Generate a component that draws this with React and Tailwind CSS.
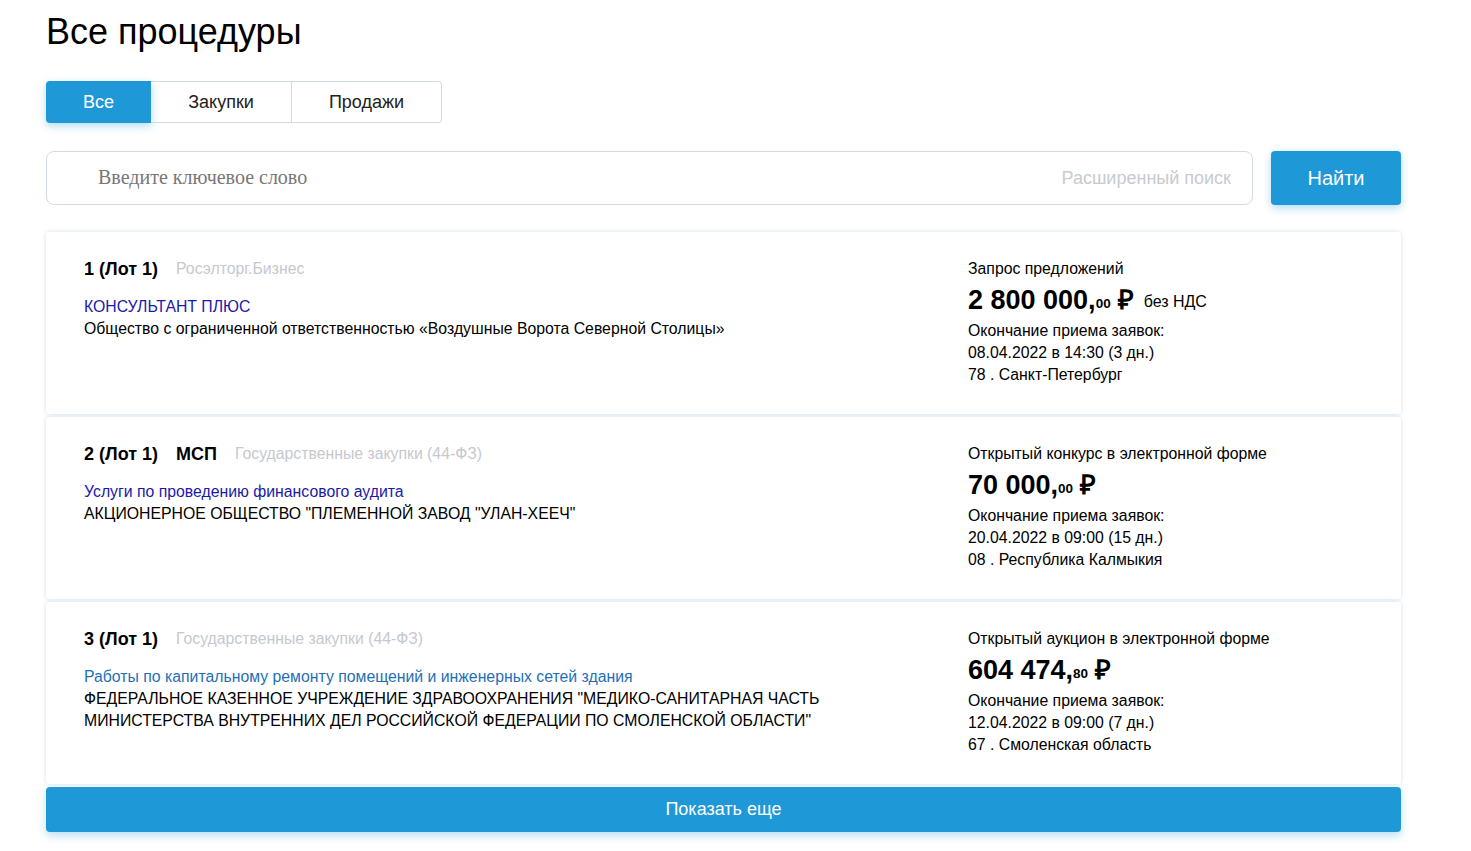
import React from "react";

const cards = [
  {
    num: "1 (Лот 1)",
    msp: false,
    platform: "Росэлторг.Бизнес",
    title: "КОНСУЛЬТАНТ ПЛЮС",
    titleColor: "text-[#1a1aa8]",
    org: ["Общество с ограниченной ответственностью «Воздушные Ворота Северной Столицы»"],
    type: "Запрос предложений",
    price: "2 800 000,",
    cents: "00",
    vat: true,
    date: "08.04.2022 в 14:30 (3 дн.)",
    region: "78 . Санкт-Петербург",
  },
  {
    num: "2 (Лот 1)",
    msp: true,
    platform: "Государственные закупки (44-ФЗ)",
    title: "Услуги по проведению финансового аудита",
    titleColor: "text-[#1a1aa8]",
    org: ['АКЦИОНЕРНОЕ ОБЩЕСТВО "ПЛЕМЕННОЙ ЗАВОД "УЛАН-ХЕЕЧ"'],
    type: "Открытый конкурс в электронной форме",
    price: "70 000,",
    cents: "00",
    vat: false,
    date: "20.04.2022 в 09:00 (15 дн.)",
    region: "08 . Республика Калмыкия",
  },
  {
    num: "3 (Лот 1)",
    msp: false,
    platform: "Государственные закупки (44-ФЗ)",
    title: "Работы по капитальному ремонту помещений и инженерных сетей здания",
    titleColor: "text-[#1f6fb8]",
    org: [
      'ФЕДЕРАЛЬНОЕ КАЗЕННОЕ УЧРЕЖДЕНИЕ ЗДРАВООХРАНЕНИЯ "МЕДИКО-САНИТАРНАЯ ЧАСТЬ',
      'МИНИСТЕРСТВА ВНУТРЕННИХ ДЕЛ РОССИЙСКОЙ ФЕДЕРАЦИИ ПО СМОЛЕНСКОЙ ОБЛАСТИ"',
    ],
    type: "Открытый аукцион в электронной форме",
    price: "604 474,",
    cents: "80",
    vat: false,
    date: "12.04.2022 в 09:00 (7 дн.)",
    region: "67 . Смоленская область",
  },
];

function Card({ c }) {
  return (
    <div className="flex h-[182px] rounded-[3px] bg-white pl-[38px] pt-[26px] shadow-[0_0_4px_rgba(200,215,230,0.8)]">
      <div className="w-[884px]">
        <div className="flex h-[22px] items-center text-[18px] leading-[22px]">
          <span className="font-bold text-black">{c.num}</span>
          {c.msp && <span className="ml-[18px] font-bold text-black">МСП</span>}
          <span className="ml-[18px] text-[15.8px] text-[#c5c9cf]">{c.platform}</span>
        </div>
        <div className={`mt-[16px] text-[15.8px] leading-[22px] ${c.titleColor}`}>{c.title}</div>
        <div className="text-[15.8px] leading-[22px] text-black">
          {c.org.map((l, i) => (
            <div key={i}>{l}</div>
          ))}
        </div>
      </div>
      <div className="flex-1 text-[15.8px] leading-[22px] text-black">
        <div>{c.type}</div>
        <div className="flex h-[40px] items-center">
          <span className="text-[27px] font-bold leading-[32px]">{c.price}</span>
          <span className="mt-[8px] text-[13.5px] font-bold">{c.cents}</span>
          <span className="ml-[7px] text-[27px] font-bold leading-[32px]">₽</span>
          {c.vat && <span className="ml-[10px] mt-[4px] text-[16px]">без НДС</span>}
        </div>
        <div>Окончание приема заявок:</div>
        <div>{c.date}</div>
        <div>{c.region}</div>
      </div>
    </div>
  );
}

export default function App() {
  return (
    <div className="min-h-[851px] bg-white font-['Liberation_Sans',Arial,sans-serif] text-black">
      <div className="ml-[46px] w-[1355px] pt-[10px]">
        <h1 className="text-[36px] leading-[44px]">Все процедуры</h1>
        <div className="mt-[27px] flex h-[42px] w-[396px] text-[18px]">
          <div className="flex w-[105px] items-center justify-center rounded-l-[4px] bg-[#1e98d6] text-white shadow-[0_3px_8px_rgba(30,152,214,0.35)]">
            Все
          </div>
          <div className="flex w-[141px] items-center justify-center border-y border-r border-[#d3d9e1] text-[#222]">
            Закупки
          </div>
          <div className="flex w-[150px] items-center justify-center rounded-r-[4px] border-y border-r border-[#d3d9e1] text-[#222]">
            Продажи
          </div>
        </div>
        <div className="mt-[28px] flex h-[54px] gap-[18px]">
          <div className="flex flex-1 items-center justify-between rounded-[8px] border border-[#d5dbe3] pl-[51px] pr-[21px]">
            <span className="-mt-[2px] font-['Liberation_Serif',serif] text-[20px] text-[#777]">Введите ключевое слово</span>
            <span className="text-[18px] text-[#c7cbd1]">Расширенный поиск</span>
          </div>
          <div className="flex w-[130px] items-center justify-center rounded-[4px] bg-[#1e98d6] pb-[1px] text-[20px] text-white shadow-[0_3px_8px_rgba(30,152,214,0.35)]">
            Найти
          </div>
        </div>
        <div className="mt-[27px] flex flex-col gap-[3px]">
          {cards.map((c, i) => (
            <Card key={i} c={c} />
          ))}
        </div>
        <div className="mt-[3px] flex h-[45px] items-center justify-center rounded-[4px] bg-[#1e98d6] text-[18px] text-white shadow-[0_4px_8px_rgba(30,152,214,0.3)]">
          Показать еще
        </div>
      </div>
    </div>
  );
}
